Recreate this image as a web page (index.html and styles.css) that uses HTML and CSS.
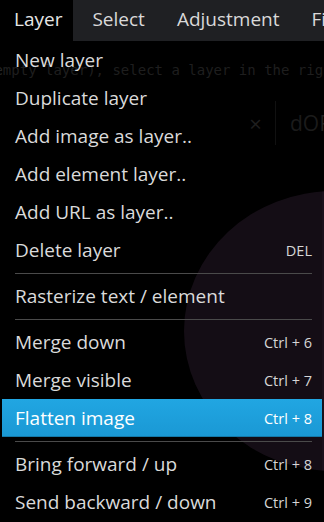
FILE: index.html
```html
<!DOCTYPE html>
<html>
<head>
<meta charset="utf-8">
<link rel="stylesheet" href="styles.css">
</head>
<body>
<div class="app">
  <nav class="menubar">
    <div class="tab active">Layer</div>
    <div class="tab">Select</div>
    <div class="tab">Adjustment</div>
    <div class="tab">Filters</div>
  </nav>
  <div class="workspace">
    <div class="hint">(empty layer), select a layer in the right list</div>
    <div class="doc-tab"><span class="close">×</span><span class="doc-name">dORIGINAL</span></div>
    <div class="blob"></div>
    <ul class="dropdown">
      <li class="item"><span>New layer</span></li>
      <li class="item"><span>Duplicate layer</span></li>
      <li class="item"><span>Add image as layer..</span></li>
      <li class="item"><span>Add element layer..</span></li>
      <li class="item"><span>Add URL as layer..</span></li>
      <li class="item"><span>Delete layer</span><span class="key">DEL</span></li>
      <li class="sep"></li>
      <li class="item"><span>Rasterize text / element</span></li>
      <li class="sep"></li>
      <li class="item"><span>Merge down</span><span class="key">Ctrl + 6</span></li>
      <li class="item"><span>Merge visible</span><span class="key">Ctrl + 7</span></li>
      <li class="item selected"><span>Flatten image</span><span class="key">Ctrl + 8</span></li>
      <li class="sep"></li>
      <li class="item"><span>Bring forward / up</span><span class="key">Ctrl + 8</span></li>
      <li class="item"><span>Send backward / down</span><span class="key">Ctrl + 9</span></li>
    </ul>
  </div>
</div>
</body>
</html>
```
FILE: styles.css
```css
* { box-sizing: border-box; }
html, body { margin: 0; padding: 0; background: #000; }
body { font-family: "Open Sans", "Noto Sans", sans-serif; color: #dcdcdc; overflow: hidden; }
.app { width: 324px; height: 522px; display: flex; flex-direction: column; }
.menubar {
  height: 41px; flex: none; display: flex; background: #1f2023; white-space: nowrap; overflow: hidden;
}
.tab { font-size: 19px; line-height: 39px; padding: 0 15px 0 17px; color: #d9d9d9; }
.tab.active { background: #000; padding: 0 11px 0 14px; color: #e6e6e6; }
.tab.active + .tab { padding-left: 19px; }
.workspace { position: relative; flex: 1; background: #000; overflow: hidden; }
.hint {
  position: absolute; left: -14px; top: 21px; white-space: nowrap;
  font-family: "DejaVu Sans Mono", monospace; font-size: 14px; color: #262626;
}
.doc-tab { position: absolute; left: 236px; top: 60px; height: 44px; display: flex; align-items: center; white-space: nowrap; }
.close { width: 40px; text-align: center; font-size: 22px; color: #262626; border-right: 1px solid #161616; line-height: 44px; }
.doc-name { padding-left: 14px; font-size: 21px; color: #222; }
.blob {
  position: absolute; left: 184px; top: 150px; width: 300px; height: 280px; border-radius: 50%;
  background: #1a111b;
}
.dropdown {
  position: absolute; left: 2px; right: 2px; top: 0; bottom: 0; margin: 0; padding: 0; list-style: none;
  background: rgba(0, 0, 0, 0.2);
}
.item {
  height: 38px; display: flex; align-items: center; justify-content: space-between;
  padding: 0 10px 0 13px; font-size: 19px; color: #dadada; white-space: nowrap;
}
.key { font-size: 14.5px; color: #d6d6d6; }
.item.selected {
  background: linear-gradient(#21a6e2, #1a98d4); color: #fff; box-shadow: inset 0 -1px 0 #1479a8;
}
.item.selected .key { color: #fff; }
.sep { height: 1px; margin: 4px 10px 3px 13px; background: #4a4a4a; }
```
